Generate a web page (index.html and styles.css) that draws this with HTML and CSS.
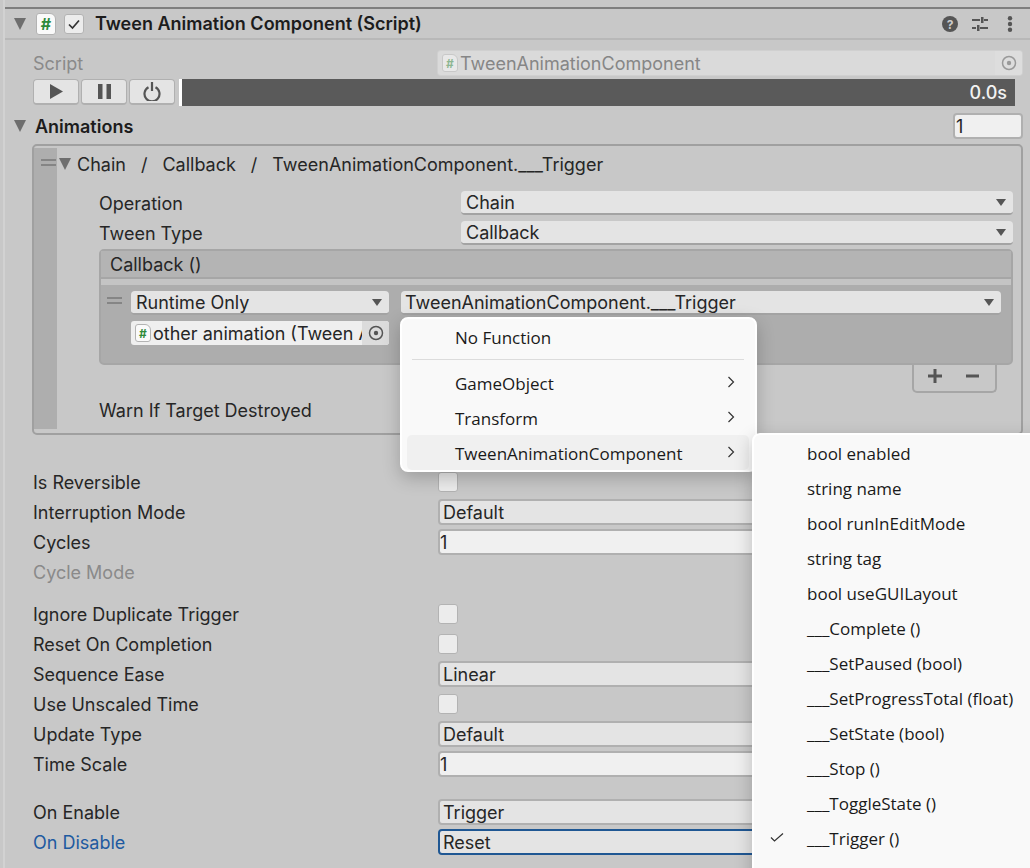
FILE: index.html
```html
<!DOCTYPE html>
<html lang="en">
<head>
<meta charset="utf-8">
<title>Tween Animation Component</title>
<link rel="stylesheet" href="styles.css">
</head>
<body>
<div class="inspector">
  <header class="comp-header">
    <span class="tri tri-gray"></span>
    <span class="script-icon"><span>#</span></span>
    <span class="check-box"><svg width="14" height="12" viewBox="0 0 14 12"><path d="M2 6.5 5.5 10 12 2.5" fill="none" stroke="#333" stroke-width="1.7"/></svg></span>
    <span class="comp-title">Tween Animation Component (Script)</span>
    <span class="head-icons">
      <svg width="16" height="16" viewBox="0 0 16 16"><circle cx="8" cy="8" r="8" fill="#555"/><text x="8" y="12.5" text-anchor="middle" class="help-q">?</text></svg>
      <svg class="sliders" width="16" height="14" viewBox="0 0 16 14"><path d="M0 3h8M12 3h4M0 11h4M8 11h8" stroke="#555" stroke-width="2" fill="none"/><path d="M9 0h2.500v6H9zM5 8h2.500v6H5z" fill="#555"/></svg>
      <svg class="dots" width="6" height="16" viewBox="0 0 6 16"><circle cx="3" cy="2.200" r="2.200" fill="#555"/><circle cx="3" cy="8" r="2.200" fill="#555"/><circle cx="3" cy="13.800" r="2.200" fill="#555"/></svg>
    </span>
  </header>

  <div class="script-row">
    <span class="label muted">Script</span>
    <div class="obj-ro">
      <span class="script-icon small faded"><span>#</span></span>
      <span class="obj-ro-text">TweenAnimationComponent</span>
      <span class="pick faded-pick"><svg width="16" height="16" viewBox="0 0 16 16"><circle cx="8" cy="8" r="6.500" fill="none" stroke="#999" stroke-width="1.500"/><circle cx="8" cy="8" r="2.200" fill="#999"/></svg></span>
    </div>
  </div>

  <div class="transport">
    <button class="t-btn"><svg width="13" height="15" viewBox="0 0 13 15"><path d="M0 0v15l13-7.500z" fill="#555"/></svg></button>
    <button class="t-btn"><svg width="13" height="15" viewBox="0 0 13 15"><path d="M0 0h4.500v15H0zM8.500 0H13v15H8.500z" fill="#555"/></svg></button>
    <button class="t-btn"><svg width="18" height="19" viewBox="0 0 18 19"><path d="M5.500 5.200a7.500 7.500 0 1 0 7 0" fill="none" stroke="#555" stroke-width="2.200"/><path d="M9 0v9" stroke="#555" stroke-width="2.200"/></svg></button>
    <div class="progress"><span class="progress-text">0.0s</span></div>
  </div>

  <div class="list-head">
    <span class="tri tri-gray"></span>
    <span class="list-title">Animations</span>
    <span class="int-field count">1</span>
  </div>

  <section class="list-box">
    <div class="handle-strip"><span class="grip"></span></div>
    <div class="list-content">
      <div class="crumb">
        <span class="tri tri-small"></span>
        <span class="crumb-text">Chain</span><span class="crumb-sep">/</span><span class="crumb-text">Callback</span><span class="crumb-sep">/</span><span class="crumb-text">TweenAnimationComponent.___Trigger</span>
      </div>
      <div class="row inner-row">
        <span class="label inner-label">Operation</span>
        <div class="dropdown inner-drop">Chain<i class="arrow"></i></div>
      </div>
      <div class="row inner-row">
        <span class="label inner-label">Tween Type</span>
        <div class="dropdown inner-drop">Callback<i class="arrow"></i></div>
      </div>
      <div class="event">
        <div class="event-head">Callback ()</div>
        <div class="event-gap"></div>
        <div class="event-body">
          <span class="grip grip-event"></span>
          <div class="event-left">
            <div class="dropdown ev-drop">Runtime Only<i class="arrow"></i></div>
            <div class="obj-field">
              <span class="script-icon small"><span>#</span></span>
              <span class="obj-text">other animation (Tween A</span>
              <span class="pick"><svg width="16" height="16" viewBox="0 0 16 16"><circle cx="8" cy="8" r="6.500" fill="none" stroke="#555" stroke-width="1.500"/><circle cx="8" cy="8" r="2.200" fill="#555"/></svg></span>
            </div>
          </div>
          <div class="dropdown ev-target">TweenAnimationComponent.___Trigger<i class="arrow"></i></div>
        </div>
      </div>
      <div class="plus-minus">
        <svg width="16" height="16" viewBox="0 0 16 16"><path d="M8 1v14M1 8h14" stroke="#555" stroke-width="3"/></svg>
        <svg width="13" height="4" viewBox="0 0 13 4"><path d="M0 2h13" stroke="#555" stroke-width="3"/></svg>
      </div>
      <div class="label warn">Warn If Target Destroyed</div>
    </div>
  </section>

  <div class="props">
    <div class="row"><span class="label">Is Reversible</span><span class="cb"></span></div>
    <div class="row"><span class="label">Interruption Mode</span><div class="dropdown">Default</div></div>
    <div class="row"><span class="label">Cycles</span><div class="int-field wide">1</div></div>
    <div class="row"><span class="label disabled">Cycle Mode</span></div>
    <div class="row group"><span class="label">Ignore Duplicate Trigger</span><span class="cb"></span></div>
    <div class="row"><span class="label">Reset On Completion</span><span class="cb"></span></div>
    <div class="row"><span class="label">Sequence Ease</span><div class="dropdown">Linear</div></div>
    <div class="row"><span class="label">Use Unscaled Time</span><span class="cb"></span></div>
    <div class="row"><span class="label">Update Type</span><div class="dropdown">Default</div></div>
    <div class="row"><span class="label">Time Scale</span><div class="int-field wide">1</div></div>
    <div class="row group2"><span class="label">On Enable</span><div class="dropdown">Trigger</div></div>
    <div class="row"><span class="label focus-label">On Disable</span><div class="dropdown focused">Reset</div></div>
  </div>
</div>

<nav class="menu menu-main">
  <div class="mi">No Function</div>
  <div class="sep"></div>
  <div class="mi sub">GameObject<svg class="chev" width="8" height="12" viewBox="0 0 8 12"><path d="M1.500 1 6.500 6l-5 5" fill="none" stroke="#333" stroke-width="1.200"/></svg></div>
  <div class="mi sub">Transform<svg class="chev" width="8" height="12" viewBox="0 0 8 12"><path d="M1.500 1 6.500 6l-5 5" fill="none" stroke="#333" stroke-width="1.200"/></svg></div>
  <div class="mi sub hover">TweenAnimationComponent<svg class="chev" width="8" height="12" viewBox="0 0 8 12"><path d="M1.500 1 6.500 6l-5 5" fill="none" stroke="#333" stroke-width="1.200"/></svg></div>
</nav>

<nav class="menu menu-sub">
  <div class="si">bool enabled</div>
  <div class="si">string name</div>
  <div class="si">bool runInEditMode</div>
  <div class="si">string tag</div>
  <div class="si">bool useGUILayout</div>
  <div class="si">___Complete ()</div>
  <div class="si">___SetPaused (bool)</div>
  <div class="si">___SetProgressTotal (float)</div>
  <div class="si">___SetState (bool)</div>
  <div class="si">___Stop ()</div>
  <div class="si">___ToggleState ()</div>
  <div class="si checked"><svg class="tick" width="14" height="9" viewBox="0 0 14 9"><path d="M1 4.500l3.500 3.500 8.500-7.500" fill="none" stroke="#333" stroke-width="1.200"/></svg>___Trigger ()</div>
  <div class="si">BroadcastMessage (string)</div>
</nav>
</body>
</html>
```
FILE: styles.css
```css
* { box-sizing: border-box; }
html, body { margin: 0; height: 100%; overflow: hidden; }
body {
  width: 1030px;
  height: 868px;
  background: #c8c8c8;
  font-family: Inter, "Liberation Sans", sans-serif;
  font-size: 18px;
  color: #262626;
  position: relative;
}
.inspector {
  margin-left: 3px;
  padding-top: 7px;
  border-left: 2px solid #d2d2d2;
  height: 868px;
}
.tri { display: inline-block; width: 0; height: 0; flex: none; border-style: solid; border-color: #6e6e6e transparent transparent; }
.tri-gray { border-width: 12px 6.5px 0; }
.tri-small { border-width: 12px 6.5px 0; }

.comp-header {
  height: 33px;
  border-top: 2px solid #7f7f7f;
  border-bottom: 2px solid #b8b8b8;
  display: flex;
  align-items: center;
  padding-left: 9px;
}
.script-icon {
  width: 20px; height: 22px;
  background: #fafafa;
  border: 1px solid #b3b3b3;
  border-radius: 3px 6px 3px 3px;
  margin-left: 10px;
  display: flex; align-items: center; justify-content: center;
  color: #2e8b3a;
  font-weight: 700;
  font-size: 16px;
  flex: none;
}
.script-icon.small { width: 16px; height: 18px; font-size: 12px; margin-left: 4px; }
.script-icon.faded { opacity: .45; }
.check-box {
  width: 20px; height: 20px;
  margin-left: 8px;
  background: #ececec;
  border: 1px solid #b3b3b3;
  border-radius: 3px;
  display: flex; align-items: center; justify-content: center;
  flex: none;
}
.comp-title { margin-left: 11px; font-weight: 600; font-size: 18px; color: #1c1c1c; }
.head-icons { margin-left: auto; display: flex; align-items: center; padding-right: 17px; }
.sliders { margin-left: 14px; }
.dots { margin-left: 19px; }
.help-q { font: 700 12px Inter, sans-serif; fill: #ccc; }

.script-row { display: flex; align-items: center; margin: 11px 8px 4px 28px; height: 24px; }
.label { width: 405px; flex: none; }
.muted { color: #8a8a8a; }
.obj-ro {
  flex: 1;
  height: 24px;
  background: #dadada;
  border-radius: 3px;
  box-shadow: 0 0 0 1px #d0d0d0;
  display: flex; align-items: center;
  color: #868686;
}
.obj-ro-text { margin-left: 2px; }
.pick { margin-left: auto; display: flex; align-items: center; justify-content: center; width: 27px; height: 24px; background: #d2d2d2; border-radius: 0 3px 3px 0; flex: none; }
.faded-pick { background: #dddddd; }

.transport { display: flex; margin-left: 28px; height: 27px; }
.t-btn {
  width: 46px; height: 26px; padding: 0;
  margin-right: 2px;
  background: #e4e4e4;
  border: 1px solid #b0b0b0;
  border-bottom-width: 2px;
  border-radius: 4px;
  display: flex; align-items: center; justify-content: center;
}
.progress {
  width: 836px; margin-left: 2px;
  border-left: 3px solid #fff;
  background: #5a5a5a;
  display: flex; align-items: center; justify-content: flex-end;
  color: #f2f2f2;
  font-weight: 500;
  padding-right: 8px;
}

.list-head { display: flex; align-items: center; height: 26px; margin-top: 7px; padding-left: 9px; }
.list-title { margin-left: 9px; font-weight: 600; font-size: 18px; color: #1c1c1c; }
.int-field {
  background: #f0f0f0;
  border: 2px solid #b0b0b0;
  border-radius: 4px;
  padding-left: 0;
  display: flex; align-items: center;
  height: 26px;
}
.count { margin-left: auto; width: 70px; margin-right: 7px; padding-left: 1px; }

.list-box {
  margin: 5px 7px 0 27px;
  height: 291px;
  border: 2px solid #a0a0a0;
  border-radius: 5px;
  display: flex;
}
.handle-strip { width: 23px; background: #aeaeae; margin: 2px 0 4px; flex: none; }
.grip { display: block; height: 7px; width: 15px; border-top: 2px solid #858585; border-bottom: 2px solid #858585; }
.handle-strip .grip { margin: 11px 0 0 7px; }
.list-content { flex: 1; position: relative; }
.crumb { display: flex; align-items: center; height: 36px; padding-left: 2px; margin-bottom: 6px; }
.crumb-text { margin-left: 6px; }
.crumb-sep { margin: 0 9px 0 15px; }
.row { display: flex; align-items: center; height: 30px; margin-left: 27px; }
.inner-row { margin-left: 42px; }
.inner-label { width: 362px; }
.dropdown {
  flex: 1;
  height: 24px;
  background: #e4e4e4;
  border-bottom: 2px solid #a3a3a3;
  border-radius: 4px;
  padding-left: 5px;
  display: flex; align-items: center;
  position: relative;
  min-width: 0;
  white-space: nowrap;
}
.arrow {
  position: absolute; right: 7px; top: 8px;
  width: 0; height: 0;
  border-style: solid;
  border-width: 7px 5.5px 0;
  border-color: #555 transparent transparent;
}
.inner-drop { margin-right: 8px; }
.event {
  margin: 1px 8px 0 42px;
  height: 116px;
  border: 2px solid #a6a6a6;
  border-radius: 5px;
  background: #adadad;
}
.event-head { height: 28px; background: #b4b4b4; padding-left: 9px; line-height: 27px; border-bottom: 2px solid #a6a6a6; }
.event-gap { height: 6px; background: #c4c4c4; }
.event-body { display: flex; align-items: flex-start; padding: 6px 10px 0 6px; }
.grip-event { margin-top: 6px; flex: none; }
.event-left { width: 258px; margin-left: 9px; flex: none; display: flex; flex-direction: column; gap: 6px; }
.ev-drop { flex: none; }
.ev-target { margin-left: 12px; flex: 1; padding-left: 4px; }
.obj-field {
  height: 24px;
  background: #efefef;
  border-radius: 3px;
  display: flex; align-items: center;
  overflow: hidden;
}
.obj-text { margin-left: 2px; white-space: nowrap; overflow: hidden; flex: 1; min-width: 0; }
.obj-field .pick { width: 27px; background: #dcdcdc; }
.plus-minus {
  position: absolute;
  right: 24px; top: 219px;
  width: 85px; height: 28px;
  border: 2px solid #a6a6a6;
  border-top: 0;
  border-radius: 0 0 5px 5px;
  padding: 0 0 4px 13px;
  display: flex; align-items: center; gap: 23px;
}
.warn { margin: 34px 0 0 42px; width: auto; line-height: 24px; }

.props { margin: 32px 8px 0 28px; }
.props .row { margin-left: 0; }
.props .dropdown, .props .int-field.wide { flex: 1; border: 2px solid #b0b0b0; height: 26px; }
.props .dropdown { background: #e4e4e4; padding-left: 3px; }
.cb { width: 20px; height: 20px; background: #ececec; border: 1px solid #b3b3b3; border-radius: 3px; }
.disabled { color: #8a8a8a; }
.group { margin-top: 12px; }
.group2 { margin-top: 18px; }
.focus-label { color: #1e5aa0; }
.props .dropdown.focused { border-color: #1f5793; }

.menu {
  position: absolute;
  background: #f9f9f9;
  border: 2px solid #fff;
  border-radius: 8px;
  box-shadow: 0 6px 18px rgba(0,0,0,.22);
  font-family: "Open Sans", "Noto Sans", sans-serif;
  font-size: 17px;
  color: #1a1a1a;
}
.menu-main { left: 400px; top: 317px; width: 357px; height: 155px; padding: 1px 6px 0 5px; }
.mi { height: 35px; padding-left: 48px; display: flex; align-items: center; position: relative; border-radius: 5px; }
.mi.sub { padding-top: 2px; }
.sep { height: 1px; background: #dcdcdc; margin: 4px 5px 5px 5px; }
.hover { background: #f0f0f0; }
.chev { position: absolute; right: 14px; top: 11px; }
.menu-sub { left: 752px; top: 433px; width: 300px; height: 460px; padding: 1px 0 0; }
.si { height: 35px; padding-left: 53px; display: flex; align-items: center; position: relative; white-space: nowrap; }
.tick { position: absolute; left: 16px; top: 12px; }
```
